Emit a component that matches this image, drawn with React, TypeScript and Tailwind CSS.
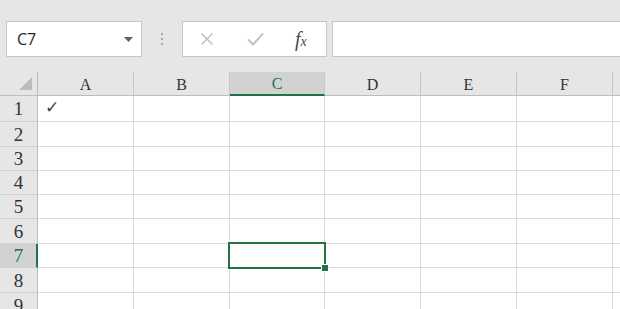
import React from 'react';

const columns = [
  { label: 'A', w: 'w-[96px]' },
  { label: 'B', w: 'w-[96px]' },
  { label: 'C', w: 'w-[95px]' },
  { label: 'D', w: 'w-[96px]' },
  { label: 'E', w: 'w-[96px]' },
  { label: 'F', w: 'w-[96px]' },
  { label: '', w: 'w-[96px]' },
];

const rows = [
  { n: 1, h: 'h-[26px]' },
  { n: 2, h: 'h-[25px]' },
  { n: 3, h: 'h-[24px]' },
  { n: 4, h: 'h-[24px]' },
  { n: 5, h: 'h-[24px]' },
  { n: 6, h: 'h-[25px]' },
  { n: 7, h: 'h-[24px]' },
  { n: 8, h: 'h-[25px]' },
  { n: 9, h: 'h-[25px]' },
];

const ACTIVE_COL = 'C';
const ACTIVE_ROW = 7;

const FormulaBar: React.FC = () => (
  <div className="flex h-[72px] items-start bg-[#e6e6e6] pt-[21px]">
    {/* Name box */}
    <div className="ml-[6px] flex h-[36px] w-[136px] items-center border border-[#c6c6c6] bg-white pl-[10px] pr-[8px]">
      <span className="flex-1 font-['Open_Sans','Liberation_Sans',sans-serif] text-[16px] text-[#262626]">C7</span>
      <svg width="9" height="5" viewBox="0 0 9 5">
        <path d="M0 0 L9 0 L4.5 5 Z" fill="#606060" />
      </svg>
    </div>
    {/* Grip dots */}
    <div className="ml-[19px] mr-[19px] flex h-[36px] flex-col items-center justify-center gap-[3px]">
      <span className="h-[2px] w-[2px] bg-[#a8a8a8]" />
      <span className="h-[2px] w-[2px] bg-[#a8a8a8]" />
      <span className="h-[2px] w-[2px] bg-[#a8a8a8]" />
    </div>
    {/* Cancel / Enter / fx */}
    <div className="flex h-[36px] w-[145px] items-center border border-[#c6c6c6] bg-white">
      <svg className="ml-[17px]" width="14" height="14" viewBox="0 0 14 14">
        <path d="M1.5 1.5 L12.5 12.5 M12.5 1.5 L1.5 12.5" stroke="#c2c2c2" strokeWidth="1.6" />
      </svg>
      <svg className="ml-[33px]" width="17" height="14" viewBox="0 0 17 14">
        <path d="M1 7.5 L6 12.5 L16 1.5" stroke="#c2c2c2" strokeWidth="2" fill="none" />
      </svg>
      <span className="ml-[31px] font-['Liberation_Serif',serif] text-[20px] italic leading-none text-[#4a4a4a]">
        f<span className="text-[14px]">x</span>
      </span>
    </div>
    {/* Formula input */}
    <div className="ml-[5px] h-[36px] flex-1 border-y border-l border-[#c6c6c6] bg-white" />
  </div>
);

const ColumnHeader: React.FC = () => (
  <div className="flex h-[24px] bg-[#e6e6e6]">
    <div className="flex h-full w-[38px] shrink-0 items-end justify-end border-b border-r border-[#bdbdbd] pb-[5px] pr-[5px]">
      <svg width="13" height="13" viewBox="0 0 13 13">
        <path d="M13 0 L13 13 L0 13 Z" fill="#bcbcbc" />
      </svg>
    </div>
    {columns.map((c, i) => {
      const active = c.label === ACTIVE_COL;
      return (
        <div
          key={i}
          className={`${c.w} flex h-full shrink-0 items-center justify-center border-r pt-[2px] font-['Liberation_Serif',serif] text-[16px] ${
            active
              ? 'border-b-2 border-r-[#c6c6c6] border-b-[#217346] bg-[#d2d2d2] text-[#217346]'
              : 'border-b border-r-[#c6c6c6] border-b-[#bdbdbd] text-[#333]'
          }`}
        >
          {c.label}
        </div>
      );
    })}
  </div>
);

const Row: React.FC<{ n: number; h: string }> = ({ n, h }) => {
  const activeRow = n === ACTIVE_ROW;
  return (
    <div className={`flex ${h}`}>
      <div
        className={`flex h-full w-[38px] shrink-0 items-center justify-center border-b border-b-[#d0d0d0] pt-[2px] font-['Liberation_Serif',serif] text-[19px] ${
          activeRow
            ? 'border-r-2 border-r-[#217346] bg-[#d2d2d2] pl-[1px] text-[#217346]'
            : 'border-r border-r-[#bdbdbd] bg-[#e6e6e6] text-[#333]'
        }`}
      >
        {n}
      </div>
      {columns.map((c, i) => {
        const active = activeRow && c.label === ACTIVE_COL;
        return (
          <div key={i} className={`${c.w} relative h-full shrink-0 border-b border-r border-[#dadada] bg-white`}>
            {n === 1 && c.label === 'A' && (
              <span className="absolute left-[7px] top-[1px] font-['DejaVu_Sans',sans-serif] text-[17px] leading-[20px] text-[#444]">✓</span>
            )}
            {active && (
              <>
                <div className="absolute -left-[2px] -top-[2px] z-10 h-[27px] w-[98px] border-2 border-[#217346]" />
                <div className="absolute -bottom-[5px] -right-[5px] z-20 h-[8px] w-[8px] border border-white bg-[#217346]" />
              </>
            )}
          </div>
        );
      })}
    </div>
  );
};

export default function App() {
  return (
    <div className="h-[309px] w-[620px] overflow-hidden bg-white">
      <FormulaBar />
      <ColumnHeader />
      {rows.map((r) => (
        <Row key={r.n} n={r.n} h={r.h} />
      ))}
    </div>
  );
}
